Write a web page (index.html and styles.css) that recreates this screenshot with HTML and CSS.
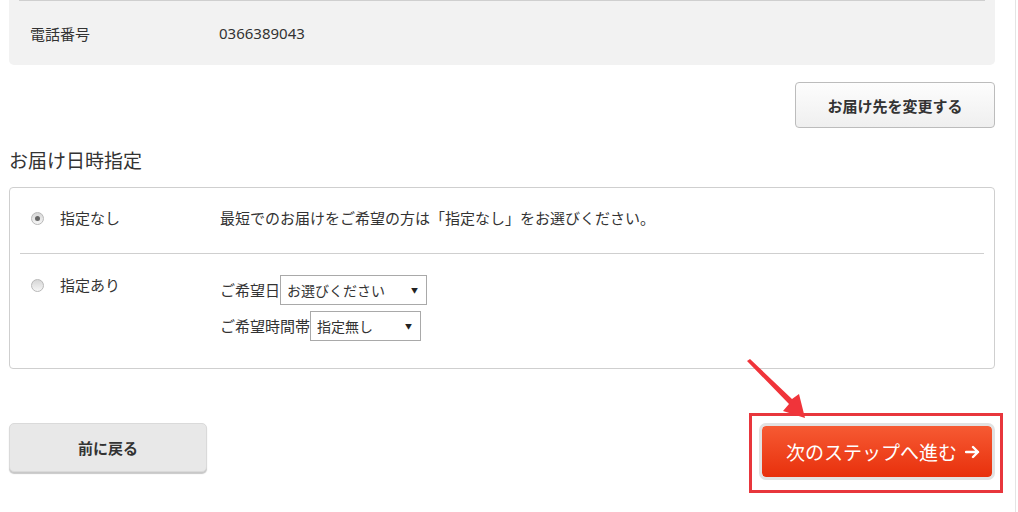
FILE: index.html
```html
<!DOCTYPE html>
<html lang="ja">
  <head>
    <meta charset="utf-8">
    <link rel="stylesheet" href="styles.css">
  </head>
  <body>
    <div class="page">
      <div class="addr-box">
        <div class="addr-row">
          <div class="addr-label">電話番号</div>
          <div class="addr-value">0366389043</div>
        </div>
      </div>

      <div class="change-row">
        <button class="btn-change">お届け先を変更する</button>
      </div>

      <h2 class="section-title">お届け日時指定</h2>

      <div class="delivery-box">
        <div class="delivery-row">
          <label class="opt">
            <span class="radio checked"></span>
            <span class="opt-label">指定なし</span>
          </label>
          <div class="opt-body">最短でのお届けをご希望の方は「指定なし」をお選びください。</div>
        </div>
        <div class="delivery-row last">
          <label class="opt">
            <span class="radio"></span>
            <span class="opt-label">指定あり</span>
          </label>
          <div class="opt-body">
            <div class="field">
              <span>ご希望日</span>
              <span class="select-wrap date">
                <select><option>お選びください</option></select>
                <span class="caret">▼</span>
              </span>
            </div>
            <div class="field">
              <span>ご希望時間帯</span>
              <span class="select-wrap time">
                <select><option>指定無し</option></select>
                <span class="caret">▼</span>
              </span>
            </div>
          </div>
        </div>
      </div>

      <div class="step-row">
        <button class="btn-back">前に戻る</button>
        <button class="btn-next">次のステップへ進む
          <svg class="arrow" width="15" height="14" viewBox="0 0 15 14">
            <path d="M1 7 H13 M8 2 L13 7 L8 12" fill="none" stroke="#fff" stroke-width="2.4" stroke-linecap="round" stroke-linejoin="round"/>
          </svg>
        </button>
      </div>

      <!-- 注釈 -->
      <svg class="annotation" width="1018" height="512" viewBox="0 0 1018 512">
        <rect x="750.5" y="414.5" width="251" height="77" fill="none" stroke="#e8363c" stroke-width="3"/>
        <polygon points="747,361 750,359 792,399 799,394 805,418 783,411 789,404" fill="#f0343a"/>
      </svg>
    </div>
  </body>
</html>
```

FILE: styles.css
```css
/* Общие стили */
body {
  margin: 0;
  background: #fff;
  font-family: "Noto Sans CJK JP", "Noto Sans", sans-serif;
  color: #333;
  font-size: 15px;
}

.page {
  position: relative;
  width: 1016px;
  height: 512px;
  padding: 0 20px 0 9px;
  box-sizing: border-box;
  border-right: 1px solid #e4e4e4;
  overflow: hidden;
}

/* адрес */
.addr-box {
  background: #f2f2f2;
  border-radius: 0 0 5px 5px;
  padding: 0 10px;
  height: 65px;
}

.addr-row {
  display: flex;
  align-items: center;
  height: 64px;
  border-top: 1px solid #cfcfcf;
  padding-left: 11px;
  font-size: 15px;
}

.addr-label {
  width: 189px;
}

.addr-value {
  font-family: "Noto Sans", sans-serif;
  font-size: 15px;
}

.change-row {
  display: flex;
  justify-content: flex-end;
  margin-top: 17px;
}

button {
  font-family: inherit;
  color: #333;
  cursor: pointer;
}

.btn-change {
  width: 200px;
  height: 46px;
  border: 1px solid #bcbcbc;
  border-radius: 4px;
  background: linear-gradient(#fdfdfd, #efefef);
  font-size: 15px;
  font-weight: bold;
}

.section-title {
  margin: 20px 0 15px;
  font-size: 19px;
  font-weight: normal;
  line-height: 24px;
}

/* блок доставки */
.delivery-box {
  border: 1px solid #cfcfcf;
  border-radius: 4px;
}

.delivery-row {
  display: flex;
  margin: 0 10px;
  padding: 20px 0 25px 11px;
  border-bottom: 1px solid #cfcfcf;
  line-height: 20px;
}

.delivery-row.last {
  border-bottom: none;
  padding-top: 21px;
  padding-bottom: 27px;
}

.opt {
  display: flex;
  align-items: center;
  width: 189px;
  height: 20px;
}

.radio {
  position: relative;
  width: 11px;
  height: 11px;
  border: 1px solid #b8b8b8;
  border-radius: 50%;
  background: linear-gradient(#d6d6d6, #f6f6f6);
  margin-right: 16px;
  box-sizing: content-box;
}

.radio.checked::after {
  content: "";
  position: absolute;
  left: 3px;
  top: 3px;
  width: 5px;
  height: 5px;
  border-radius: 50%;
  background: #666;
}

.opt-label {
  font-size: 15px;
}

.opt-body {
  font-size: 15px;
}

.field {
  display: flex;
  align-items: center;
  height: 30px;
  margin-bottom: 6px;
}

.field:last-child {
  margin-bottom: 0;
}

.select-wrap {
  position: relative;
  display: inline-block;
  height: 30px;
}

.select-wrap select {
  appearance: none;
  -webkit-appearance: none;
  height: 30px;
  border: 1px solid #a9a9a9;
  border-radius: 0;
  background: #fff;
  padding: 0 0 0 6px;
  font-family: inherit;
  font-size: 14px;
  color: #333;
}

.select-wrap.date select {
  width: 147px;
}

.select-wrap.time select {
  width: 111px;
}

.caret {
  position: absolute;
  right: 9px;
  top: 9px;
  font-size: 7px;
  line-height: 12px;
  color: #222;
  pointer-events: none;
}

/* кнопки шагов */
.step-row {
  display: flex;
  justify-content: space-between;
  align-items: flex-start;
  margin-top: 54px;
}

.btn-back {
  width: 198px;
  height: 49px;
  border: 1px solid #dadada;
  border-radius: 5px;
  background: #e8e8e8;
  box-shadow: 0 2px 1px #c8c8c8;
  font-size: 15px;
  font-weight: bold;
}

.btn-next {
  display: flex;
  align-items: center;
  width: 236px;
  height: 57px;
  padding: 0 0 0 24px;
  border: 3px solid #e2e2e2;
  border-radius: 7px;
  background: linear-gradient(#f65a33, #e8300c);
  background-clip: padding-box;
  color: #fff;
  font-size: 19px;
}

.btn-next .arrow {
  margin-left: 8px;
}

.annotation {
  position: absolute;
  left: 0;
  top: 0;
  pointer-events: none;
}
```
